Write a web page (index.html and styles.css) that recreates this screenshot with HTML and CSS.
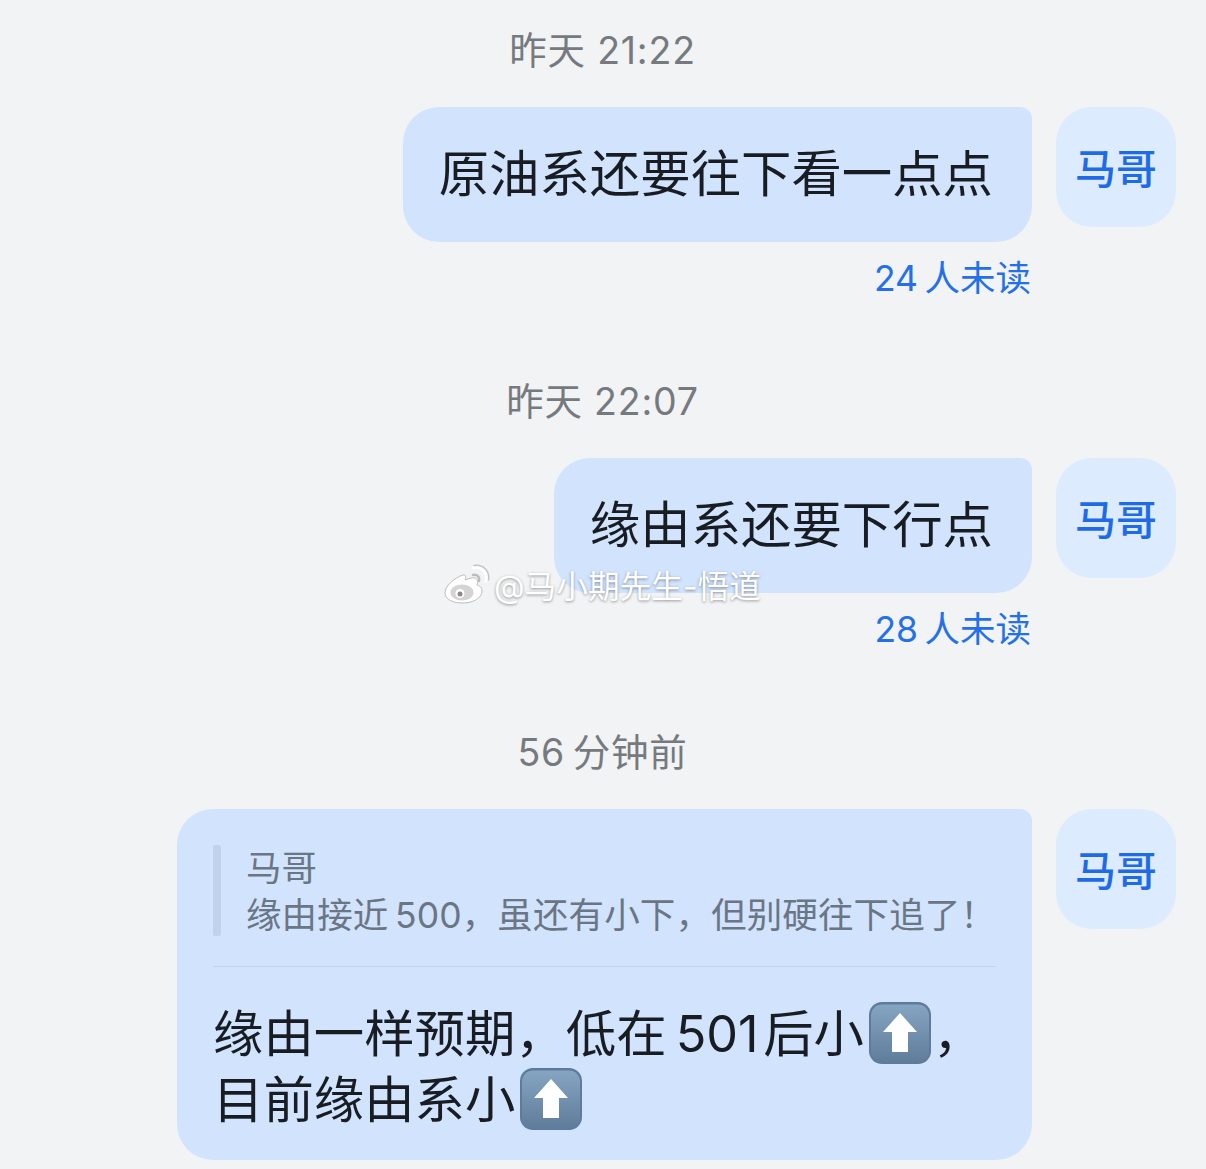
FILE: index.html
```html
<!DOCTYPE html>
<html lang="zh-CN">

<head>
  <meta charset="UTF-8">
  <meta name="viewport" content="width=device-width, initial-scale=1.0">
  <title>消息</title>
  <link rel="stylesheet" href="styles.css">
</head>

<body>
  <svg class="defs" width="0" height="0" aria-hidden="true">
    <defs>
      <linearGradient id="keyFill" x1="0" y1="0" x2="0" y2="1">
        <stop offset="0" stop-color="#86a5c2" />
        <stop offset="1" stop-color="#5f7d9b" />
      </linearGradient>
      <symbol id="upKey" viewBox="0 0 62 62">
        <rect x="0" y="0" width="62" height="62" rx="13" fill="#5e7b99" />
        <rect x="2" y="2.500" width="58" height="58" rx="11" fill="url(#keyFill)" />
        <path d="M31 11 L48 30 H39 V50 H23 V30 H14 Z" fill="#fff" />
      </symbol>
    </defs>
  </svg>

  <div class="chat">
    <section class="group">
      <div class="time">昨天 21:22</div>
      <div class="row">
        <div class="msg">
          <div class="bubble">原油系还要往下看一点点</div>
          <div class="unread">24&thinsp;人未读</div>
        </div>
        <div class="avatar">马哥</div>
      </div>
    </section>

    <section class="group">
      <div class="time">昨天 22:07</div>
      <div class="row">
        <div class="msg">
          <div class="bubble">缘由系还要下行点</div>
          <div class="unread">28&thinsp;人未读</div>
        </div>
        <div class="avatar">马哥</div>
      </div>
    </section>

    <section class="group">
      <div class="time">56&thinsp;分钟前</div>
      <div class="row">
        <div class="msg">
          <div class="bubble bubble-reply">
            <div class="quote">
              <div class="quote-bar"></div>
              <div class="quote-text">
                <div>马哥</div>
                <div>缘由接近&thinsp;500，虽还有小下，但别硬往下追了！</div>
              </div>
            </div>
            <div class="body-text">
              缘由一样预期，低在&thinsp;501&hairsp;后小<svg class="key"><use href="#upKey" /></svg>，<br>
              目前缘由系小<svg class="key"><use href="#upKey" /></svg>
            </div>
          </div>
        </div>
        <div class="avatar">马哥</div>
      </div>
    </section>
  </div>

  <!-- 水印 -->
  <div class="watermark">
    <svg class="wb-logo" viewBox="0 0 46 40" width="46" height="40">
      <path d="M19 11 C10 14 1 22 1 29 C1 36 10 39 19 39 C29 39 38 34 38 27 C38 23 35 21.500 33 21 C34 18 34 15 31 14 C28 13 24 15 21 16 C22 14 22 10 19 11 Z" fill="#fff" stroke="#bdbdbd" stroke-width="1" />
      <ellipse cx="18" cy="28.500" rx="11.500" ry="8" fill="#d4d4d4" />
      <circle cx="16" cy="29.500" r="4.500" fill="#fff" />
      <circle cx="16" cy="30" r="2.500" fill="#8a8a8a" />
      <path d="M29 11 C33 10 36 13 35 17" fill="none" stroke="#bdbdbd" stroke-width="2.500" stroke-linecap="round" />
      <path d="M29 4 C37 2 44 8 42 17" fill="none" stroke="#fff" stroke-width="3" stroke-linecap="round" />
      <path d="M30 1.500 C39 0 46 7 44.500 16" fill="none" stroke="#c4c4c4" stroke-width="1.500" stroke-linecap="round" />
    </svg>
    <span class="wb-name">@马小期先生-悟道</span>
  </div>
</body>

</html>
```

FILE: styles.css
```css
html,
body {
  margin: 0;
  padding: 0;
}

body {
  width: 1206px;
  height: 1169px;
  overflow: hidden;
  background-color: #f1f3f5;
  font-family: Inter, "Noto Sans CJK SC", sans-serif;
  position: relative;
}

.defs {
  display: block;
  height: 0;
}

.chat {
  display: flex;
  flex-direction: column;
  gap: 74px;
  padding: 25px 30px 0 31px;
}

.group {
  display: flex;
  flex-direction: column;
  gap: 32px;
}

.time {
  height: 50px;
  line-height: 52px;
  text-align: center;
  font-size: 37.5px;
  letter-spacing: 0.8px;
  color: #767a7e;
  padding-right: 2px;
}

.row {
  display: flex;
  justify-content: flex-end;
  gap: 24px;
}

.msg {
  display: flex;
  flex-direction: column;
  align-items: flex-end;
}

.bubble {
  background-color: #d2e3fd;
  border-radius: 36px 12px 36px 36px;
  padding: 36px 39px 36px 36px;
  height: 135px;
  box-sizing: border-box;
  line-height: 62px;
  font-size: 50.4px;
  color: #181d24;
  white-space: nowrap;
}

.bubble-reply {
  width: 855px;
  height: 351px;
  padding-right: 36px;
}

.unread {
  margin-top: 14px;
  margin-right: 1px;
  line-height: 46px;
  font-size: 35.5px;
  color: #2470e8;
}

.avatar {
  width: 120px;
  height: 120px;
  box-sizing: border-box;
  padding-bottom: 3px;
  border-radius: 36px;
  background-color: #dcebfe;
  color: #1f6be6;
  font-size: 41px;
  font-weight: 500;
  display: flex;
  align-items: center;
  justify-content: center;
}

.quote {
  display: flex;
  gap: 25px;
  border-bottom: 1px solid #c3d3ea;
  padding-bottom: 27px;
}

.quote-bar {
  width: 9px;
  height: 91px;
  border-radius: 2px;
  background-color: #c1d3ec;
}

.quote-text {
  font-size: 35.5px;
  letter-spacing: 0.12px;
  line-height: 47px;
  color: #6a7684;
}

.body-text {
  margin-top: 34px;
  line-height: 66px;
}

.key {
  width: 62px;
  height: 62px;
  vertical-align: -12px;
  margin: 0 2px 0 5px;
}

.watermark {
  position: absolute;
  left: 444px;
  top: 564px;
  display: flex;
  align-items: center;
  gap: 4px;
  height: 40px;
}

.wb-name {
  font-size: 31.7px;
  color: #fff;
  text-shadow: 0 1px 3px rgba(0, 0, 0, 0.4);
}
```
